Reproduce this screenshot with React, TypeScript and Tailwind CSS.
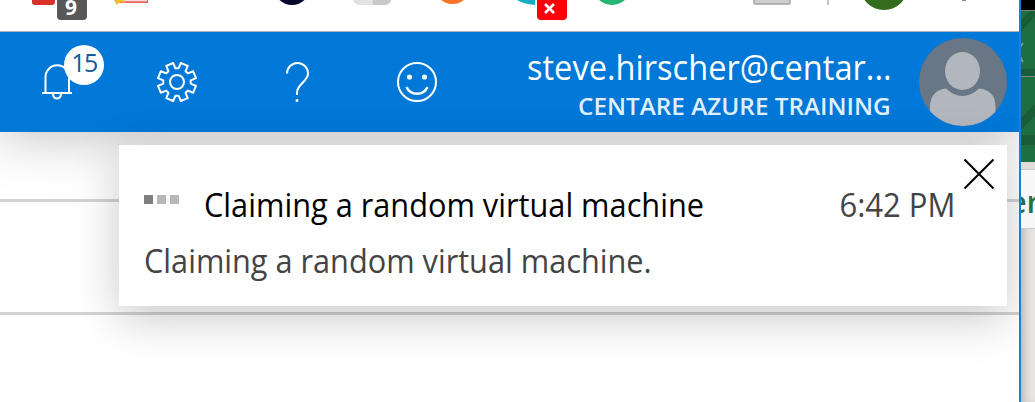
import React from "react";

function BrowserStrip() {
  return (
    <svg className="relative z-20 block h-8 w-full shrink-0" viewBox="0 0 1019 32">
      <rect width="1019" height="32" fill="#fff" />
      <rect y="31" width="1019" height="1" fill="#adb1b5" />
      <rect x="32" y="-10" width="23" height="15" rx="3" fill="#d9322a" />
      <rect x="57" y="-10" width="30" height="30" rx="4" fill="#585858" />
      <text x="71" y="15" textAnchor="middle" fontFamily="Open Sans, sans-serif" fontWeight="700" fontSize="21" fill="#fff">9</text>
      <path d="M114 0h34v3h-31z" fill="#e8615c" />
      <path d="M124 0h23v1.300h-23z" fill="#f7d9d5" />
      <path d="M115 0h9l1 3-4-1-5 3z" fill="#efc02e" />
      <circle cx="292" cy="-13" r="18" fill="#06062b" />
      <path d="M353 0h20v5h-13q-5 0-7-5z" fill="#e2e2e2" />
      <path d="M373 0h18.500q-2 5-7 5h-11.500z" fill="#c9c9c9" />
      <circle cx="452.500" cy="-14" r="18" fill="#fb7329" />
      <path d="M517 0h18v5q-12-1-18-5z" fill="#12aec6" />
      <rect x="537" y="-10" width="30" height="30" rx="4" fill="#fb0007" />
      <path d="M545 4l9 9M554 4l-9 9" stroke="#fff" strokeWidth="2.600" />
      <circle cx="612" cy="-14" r="19" fill="#27b672" />
      <rect x="754" y="-10" width="36" height="14" rx="1" fill="#cfcfcf" stroke="#a3a3a3" strokeWidth="1.500" />
      <rect x="827" width="2" height="5" fill="#c4c4c4" />
      <circle cx="884" cy="-14" r="24" fill="#346c1d" />
      <rect x="962" width="4" height="1" fill="#8a8a8a" />
    </svg>
  );
}

const gearTeeth = Array.from({ length: 8 }, (_, i) => {
  const at = (r: number, deg: number) => {
    const a = ((i * 45 + 22.5 + deg) * Math.PI) / 180;
    return `${(20 + r * Math.cos(a)).toFixed(2)} ${(20 + r * Math.sin(a)).toFixed(2)}`;
  };
  return `${at(13.8, -16)} L${at(19.4, -11)} L${at(19.4, 11)} L${at(13.8, 16)}`;
});
const gearPath = `M${gearTeeth.join(" L")} Z`;

function BellButton() {
  return (
    <div className="relative h-10 w-10">
      <svg className="block" width="40" height="40" viewBox="37 62 40 40" fill="none" stroke="#fff" strokeWidth="2">
        <path d="M45.500 92.500V77a11.750 11.750 0 0 1 23.500 0v15.500" />
        <path d="M42 93h30" />
        <path d="M53 94a4 4.500 0 0 0 8 0" strokeWidth="2.200" />
      </svg>
      <span className="absolute -top-[17px] left-[27px] flex h-10 w-10 items-center justify-center rounded-full bg-white pb-[5px] text-[25px] leading-none tracking-[-1.5px] text-[#155a9c]">
        15
      </span>
    </div>
  );
}

function Header() {
  return (
    <header className="relative z-10 flex h-[100px] shrink-0 items-center bg-[#0078d7] pl-[37px] pr-3 shadow-[0_4px_54px_rgba(0,0,0,0.26)]">
      <div className="flex gap-20">
        <BellButton />
        <svg width="40" height="40" viewBox="0 0 40 40" fill="none" stroke="#fff" strokeWidth="2" strokeLinejoin="round">
          <path d={gearPath} />
          <circle cx="20" cy="20" r="7" />
        </svg>
        <svg width="40" height="40" viewBox="0 0 40 40" fill="none" stroke="#fff" strokeWidth="2">
          <path d="M10 11.500a10.500 10.500 0 0 1 21 0c0 8-11 10.500-11 19v2.500" />
          <path d="M18.700 38.500h2.600" strokeWidth="2.600" />
        </svg>
        <svg width="40" height="40" viewBox="0 0 40 40" fill="none" stroke="#fff" strokeWidth="2">
          <circle cx="20" cy="20" r="19" />
          <circle cx="12.500" cy="15" r="2.600" fill="#fff" stroke="none" />
          <circle cx="27.500" cy="15" r="2.600" fill="#fff" stroke="none" />
          <path d="M9.500 25a11.500 11.500 0 0 0 21 0" strokeWidth="2.400" />
        </svg>
      </div>
      <div className="ml-auto mr-7 flex flex-col items-end whitespace-nowrap pt-[10px]">
        <div className="origin-right scale-x-[0.958] text-[34px] leading-[38px] text-white">steve.hirscher@centar...</div>
        <div className="origin-right scale-x-[1.013] text-[24px] font-semibold leading-[40px] text-[#e1effa]">CENTARE AZURE TRAINING</div>
      </div>
      <svg className="shrink-0" width="88" height="88" viewBox="0 0 88 88">
        <defs>
          <clipPath id="avatar">
            <circle cx="44" cy="44" r="44" />
          </clipPath>
        </defs>
        <g clipPath="url(#avatar)">
          <rect width="88" height="88" fill="#687686" />
          <path d="M11 88V68Q12 52 27 50.500Q35 58 43.500 58T60 50.500Q76 52 76.500 68V88z" fill="#b2b7bd" />
          <ellipse cx="43.500" cy="33" rx="17.500" ry="19" fill="#b2b7bd" />
        </g>
      </svg>
    </header>
  );
}

function Toast() {
  return (
    <section className="relative z-20 ml-[119px] mr-3 mt-[13px] h-[161px] bg-white pl-[25px] pr-[13px] shadow-[0_12px_44px_rgba(0,0,0,0.22)]">
      <div className="flex h-[88px] items-end whitespace-nowrap text-[33px] leading-[56px]">
        <div className="flex gap-1 self-start pt-[50px]">
          <span className="h-[9px] w-[9px] bg-[#7f7f7f]" />
          <span className="h-[9px] w-[9px] bg-[#b8b8b8]" />
          <span className="h-[9px] w-[9px] bg-[#b8b8b8]" />
        </div>
        <div className="ml-[25px] origin-left scale-x-[0.931] text-black">Claiming a random virtual machine</div>
        <div className="ml-auto mr-[39px] origin-right scale-x-[0.94] text-[#444]">6:42 PM</div>
      </div>
      <div className="origin-left scale-x-[0.93] whitespace-nowrap text-[33px] leading-[56px] text-[#444]">Claiming a random virtual machine.</div>
      <svg className="absolute right-[12px] top-[13px]" width="32" height="32" viewBox="0 0 32 32" stroke="#000" strokeWidth="2">
        <path d="M1.500 1.500l29 29M30.500 1.500l-29 29" />
      </svg>
    </section>
  );
}

function BackgroundWindow() {
  return (
    <aside className="flex w-[14px] shrink-0 flex-col overflow-hidden bg-[#e6e5e3] shadow-[inset_8px_0_10px_-6px_rgba(0,0,0,0.25)]">
      <svg className="block shrink-0" width="14" height="169" viewBox="0 0 14 169">
        <rect width="14" height="10" fill="#000" />
        <rect y="10" width="14" height="152" fill="#1e6e42" />
        <path d="M0 20L9 11h5v5L0 32zM0 118l14-14v12L0 130z" fill="#1a5c38" />
        <rect y="69" width="14" height="7" fill="#1a5c38" />
        <rect y="135" width="14" height="10" fill="#1a5c38" />
        <path d="M0 10.500h14M0 76.500h14" stroke="#7f8582" />
        <path d="M2 43l-3 4M-1 57l3 5" stroke="#6fa085" strokeWidth="2" />
        <rect y="162" width="14" height="7" fill="#dfdddb" />
      </svg>
      <div className="flex h-[60px] w-[14px] shrink-0 items-center justify-end overflow-hidden border-y border-[#c9c9c9] bg-[#f7f7f7] pt-[3px] text-[31px] font-semibold leading-[54px] text-[#217346]">
        <span className="-mr-[5px]">er</span>
      </div>
    </aside>
  );
}

export default function App() {
  return (
    <div className="flex h-[402px] w-[1035px] overflow-hidden bg-white font-['Open_Sans','Noto_Sans',sans-serif]">
      <main className="flex w-[1021px] shrink-0 flex-col overflow-hidden border-r-2 border-[#1681d9]">
        <BrowserStrip />
        <Header />
        <div className="grid flex-1">
          <div className="col-start-1 row-start-1 flex flex-col pt-[67px]">
            <div className="relative z-10 h-[113px] border-t-[3px] border-[#d3d3d3] bg-white" />
            <div className="border-t-[3px] border-[#d3d3d3]" />
          </div>
          <div className="col-start-1 row-start-1">
            <Toast />
          </div>
        </div>
      </main>
      <BackgroundWindow />
    </div>
  );
}
